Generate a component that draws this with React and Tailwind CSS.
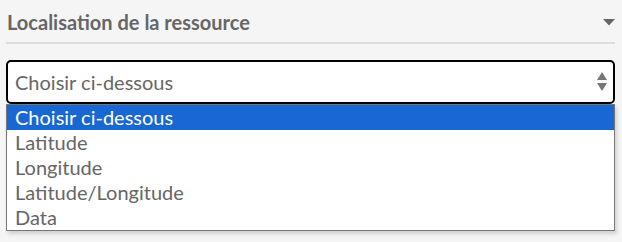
import React, { useState } from 'react'

const options = ['Choisir ci-dessous', 'Latitude', 'Longitude', 'Latitude/Longitude', 'Data']

const App = () => {
    const [selected, setSelected] = useState(0)

    return (
        <div className="w-[622px] h-[242px] bg-[#f5f5f5] px-[6px] pt-[9px] font-['Lato','Open_Sans',sans-serif] text-[#666666]">
            <div className="flex items-center justify-between h-[26px] pl-[1px]">
                <h2 className="text-[20px] font-bold leading-none">Localisation de la ressource</h2>
                <svg width="12" height="7" viewBox="0 0 12 7" className="mr-[1px]">
                    <path d="M0 0 L12 0 L6 6.5 Z" fill="#666666" />
                </svg>
            </div>
            <div className="mt-[7px] h-[2px] w-[609px] bg-[#dddddd]" />

            <div className="relative mt-[16px] w-[609px]">
                <div className="flex items-center justify-between h-[44px] border-2 border-black rounded-[5px] bg-white pl-[7px] pr-[6px]">
                    <span className="text-[20px]">{options[selected]}</span>
                    <svg width="10" height="20" viewBox="0 0 10 20">
                        <path d="M5 0 L10 8 L0 8 Z" fill="#777777" />
                        <path d="M0 11 L10 11 L5 19 Z" fill="#777777" />
                    </svg>
                </div>
                <ul className="absolute left-0 top-[44px] w-[609px] bg-white border border-[#767676] shadow-[2px_3px_4px_rgba(0,0,0,0.15)]">
                    {options.map((opt, i) => (
                        <li
                            key={opt}
                            onClick={() => setSelected(i)}
                            className={`h-[25px] leading-[25px] pl-[8px] text-[20px] ${i === selected ? 'bg-[#1967d2] text-white' : 'text-[#666666]'}`}
                        >
                            {opt}
                        </li>
                    ))}
                </ul>
            </div>
        </div>
    )
}

export default App
